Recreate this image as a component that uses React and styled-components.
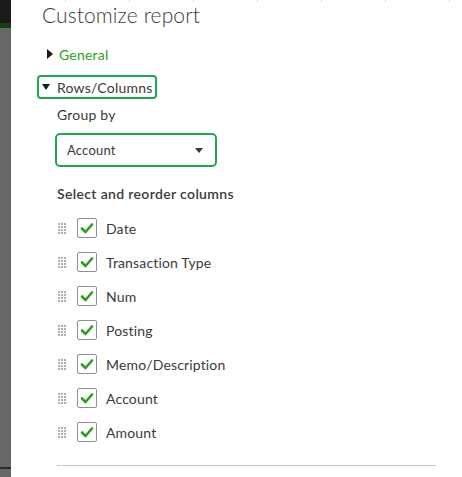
import styled, { createGlobalStyle } from "styled-components"

const GlobalStyle = createGlobalStyle`
    html, body {
        margin: 0;
        padding: 0;
        background: #fff;
    }
    body {
        font-family: Lato, "Open Sans", sans-serif;
        color: #393a3d;
    }
`

const Page = styled.div`
    display: flex;
    width: 462px;
    height: 477px;
    overflow: hidden;
    background:
        repeating-linear-gradient(to right, transparent 0 1px, #d4d4d4 1px 2px, transparent 2px 64px) 0 0 / 100% 2px no-repeat,
        #fff;
`

const Strip = styled.div`
    width: 11px;
    flex: none;
    background: linear-gradient(
        to bottom,
        #1b1b1b 0 23px,
        #123f12 23px 28px,
        #676767 28px 467px,
        #2a2a2a 467px 469px,
        #676767 469px
    );
`

const Panel = styled.div`
    flex: 1;
    padding-left: 26px;
    display: flex;
    flex-direction: column;
`

const Title = styled.h2`
    margin: 0 0 0 5px;
    font-size: 21px;
    font-weight: 300;
    line-height: 30px;
    letter-spacing: 0.1px;
    color: #393a3d;
`

const Section = styled.div`
    display: flex;
    align-items: center;
    gap: 6px;
    height: 20px;
    margin-top: ${(p) => p.$top}px;
    margin-left: 10px;
    font-size: 14px;
    letter-spacing: 0.2px;
    color: #2ca01c;
`

const Caret = styled.span`
    width: 0;
    height: 0;
    border-style: solid;
    ${(p) =>
        p.$open
            ? "border-width: 6px 4.5px 0 4.5px; border-color: #1b1b1b transparent transparent transparent;"
            : "border-width: 5px 0 5px 6px; border-color: transparent transparent transparent #1b1b1b;"}
`

const FocusBox = styled.div`
    display: inline-flex;
    align-self: flex-start;
    align-items: center;
    gap: 7px;
    height: 20px;
    margin-top: 11px;
    padding: 0 3px 0 3px;
    border: 2px solid #1fa850;
    border-radius: 4px;
    font-size: 14px;
    letter-spacing: 0.2px;
    color: #393a3d;
`

const Label = styled.div`
    margin: ${(p) => p.$top}px 0 0 20px;
    font-size: 14px;
    line-height: 20px;
    color: #393a3d;
    font-weight: ${(p) => (p.$bold ? 600 : 400)};
    letter-spacing: ${(p) => (p.$bold ? 0.35 : 0.2)}px;
`

const Select = styled.div`
    display: flex;
    align-items: center;
    justify-content: space-between;
    box-sizing: border-box;
    width: 162px;
    height: 34px;
    margin: 8px 0 0 18px;
    padding: 0 12px 0 10px;
    border: 2px solid #1fa850;
    border-radius: 5px;
    font-size: 13px;
    letter-spacing: 0.2px;
    color: #393a3d;
`

const Arrow = styled.span`
    width: 0;
    height: 0;
    border-style: solid;
    border-width: 5px 4px 0 4px;
    border-color: #393a3d transparent transparent transparent;
`

const List = styled.div`
    display: flex;
    flex-direction: column;
    gap: 14px;
    margin: 14px 0 0 21px;
`

const Row = styled.div`
    display: flex;
    align-items: center;
    height: 20px;
    font-size: 14px;
    letter-spacing: 0.15px;
    color: #393a3d;
`

const Handle = styled.span`
    display: grid;
    grid-template-columns: repeat(3, 2px);
    grid-auto-rows: 2px;
    gap: 1px;
    width: 8px;
    margin-right: 11px;

    & i {
        background: #b0b0b0;
    }
`

const Box = styled.span`
    display: flex;
    align-items: center;
    justify-content: center;
    box-sizing: border-box;
    width: 20px;
    height: 20px;
    margin-right: 9px;
    border: 1px solid #8d9096;
    border-radius: 2px;
    background: #fff;
`

const Divider = styled.div`
    width: 379px;
    height: 1px;
    margin: 23px 0 0 20px;
    background: #c8c8c8;
`

const columns = ["Date", "Transaction Type", "Num", "Posting", "Memo/Description", "Account", "Amount"]

function Check() {
    return (
        <svg width="14" height="12" viewBox="0 0 14 12">
            <path d="M2 6.5 L5.5 10 L12 2.5" fill="none" stroke="#2ca01c" strokeWidth="2.6" strokeLinecap="round" strokeLinejoin="round" />
        </svg>
    )
}

export default function App() {
    return (
        <>
            <GlobalStyle />
            <Page>
                <Strip />
                <Panel>
                    <Title>Customize report</Title>
                    <Section $top={14}>
                        <Caret />
                        General
                    </Section>
                    <FocusBox>
                        <Caret $open />
                        Rows/Columns
                    </FocusBox>
                    <Label $top={6}>Group by</Label>
                    <Select>
                        Account
                        <Arrow />
                    </Select>
                    <Label $top={17} $bold>Select and reorder columns</Label>
                    <List>
                        {columns.map((c) => (
                            <Row key={c}>
                                <Handle>
                                    {Array.from({ length: 12 }).map((_, i) => <i key={i} />)}
                                </Handle>
                                <Box><Check /></Box>
                                {c}
                            </Row>
                        ))}
                    </List>
                    <Divider />
                </Panel>
            </Page>
        </>
    )
}
